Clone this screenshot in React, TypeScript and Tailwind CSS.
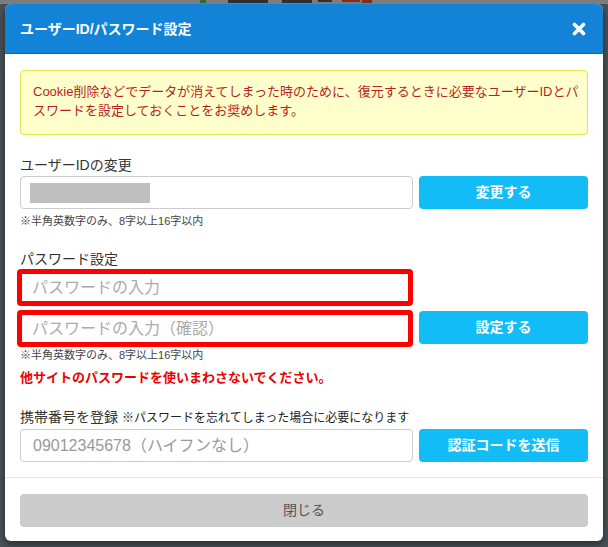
import React from 'react';

const FONT = { fontFamily: '"Liberation Sans", "Noto Sans CJK JP", sans-serif' };

function CloseIcon() {
    return (
        <svg width="14" height="14" viewBox="0 0 14 14" className="block">
            <path d="M2.5 2.5 L11.5 11.5 M11.5 2.5 L2.5 11.5" stroke="#ffffff" strokeWidth="3.6" strokeLinecap="round" />
        </svg>
    );
}

export default function App() {
    return (
        <div className="min-h-screen bg-[#4a5358] text-[#333333]" style={FONT}>
            {/* page behind the overlay */}
            <div className="h-[4px] bg-[#7c7c7c] relative">
                <div className="absolute left-[200px] top-0 h-[3px] w-[6px] bg-[#2f6b2f]" />
                <div className="absolute left-[228px] top-0 h-[3px] w-[40px] bg-[#303030]" />
                <div className="absolute left-[282px] top-0 h-[3px] w-[30px] bg-[#303030]" />
                <div className="absolute left-[318px] top-0 h-[2px] w-[14px] bg-[#303030]" />
                <div className="absolute left-[342px] top-0 h-[2px] w-[18px] bg-[#8a2a1a]" />
                <div className="absolute left-[362px] top-0 h-[3px] w-[10px] bg-[#8a2a1a]" />
            </div>

            <div className="mx-[5px] bg-white rounded-[6px] overflow-hidden shadow-[0_3px_9px_rgba(0,0,0,0.5)]">
                {/* header */}
                <div className="h-[50px] bg-[#1383d7] border-b border-[#0f68ab] flex items-center justify-between pl-[15px] pr-[17px]">
                    <h2 className="text-white text-[14px] font-bold leading-none">ユーザーID/パスワード設定</h2>
                    <CloseIcon />
                </div>

                {/* body */}
                <div className="px-[15px] pt-[16px] pb-[15px]">
                    <div className="h-[65px] bg-[#ffffcc] border border-[#e2e24a] rounded-[4px] pl-[12px] pt-[11px] text-[13px] leading-[19px] text-[#b81f1f]">
                        <div className="whitespace-nowrap">Cookie削除などでデータが消えてしまった時のために、復元するときに必要なユーザーIDとパ</div>
                        <div className="whitespace-nowrap">スワードを設定しておくことをお奨めします。</div>
                    </div>

                    {/* user id */}
                    <div className="mt-[20px] text-[14px] leading-[20px]">ユーザーIDの変更</div>
                    <div className="mt-[1px] flex gap-[6px]">
                        <div className="flex-1 h-[33px] border border-[#cccccc] rounded-[4px] flex items-center pl-[9px]">
                            <div className="w-[120px] h-[20px] bg-[#bfbfbf]" />
                        </div>
                        <button className="w-[169px] h-[33px] bg-[#12bdf7] rounded-[4px] text-white text-[14px] font-bold">変更する</button>
                    </div>
                    <div className="mt-[5px] text-[11px] leading-[15px] text-[#444444]">※半角英数字のみ、8字以上16字以内</div>

                    {/* password */}
                    <div className="mt-[21px] text-[14px] leading-[19px]">パスワード設定</div>
                    <div className="-ml-[3px] w-[396px] h-[37px] border-[5px] border-[#ff0000] rounded-[4px] flex items-center pl-[10px]">
                        <input
                            className="w-full outline-none bg-transparent text-[16px] placeholder:text-[#aaaaaa]"
                            placeholder="パスワードの入力"
                            style={FONT}
                        />
                    </div>
                    <div className="mt-[4px] flex items-start">
                        <div className="-ml-[3px] w-[396px] h-[37px] border-[5px] border-[#ff0000] rounded-[4px] flex items-center pl-[10px]">
                            <input
                                className="w-full outline-none bg-transparent text-[16px] placeholder:text-[#aaaaaa]"
                                placeholder="パスワードの入力（確認）"
                                style={FONT}
                            />
                        </div>
                        <button className="ml-auto mt-[1px] w-[169px] h-[33px] bg-[#12bdf7] rounded-[4px] text-white text-[14px] font-bold">設定する</button>
                    </div>
                    <div className="mt-[1px] text-[11px] leading-[15px] text-[#444444]">※半角英数字のみ、8字以上16字以内</div>
                    <div className="mt-[5px] text-[13px] leading-[19px] font-bold text-[#ee0000]">他サイトのパスワードを使いまわさないでください。</div>

                    {/* phone */}
                    <div className="mt-[20px] leading-[20px] flex items-baseline">
                        <span className="text-[14px]">携帯番号を登録</span>
                        <span className="ml-[4px] text-[12px] text-[#222222]">※パスワードを忘れてしまった場合に必要になります</span>
                    </div>
                    <div className="mt-[1px] flex gap-[6px]">
                        <div className="flex-1 h-[33px] border border-[#cccccc] rounded-[4px] flex items-center pl-[12px]">
                            <input
                                className="w-full outline-none bg-transparent text-[16px] placeholder:text-[#999999]"
                                placeholder="09012345678（ハイフンなし）"
                                style={FONT}
                            />
                        </div>
                        <button className="w-[169px] h-[33px] bg-[#12bdf7] rounded-[4px] text-white text-[14px] font-bold">認証コードを送信</button>
                    </div>
                </div>

                {/* footer */}
                <div className="border-t border-[#e5e5e5] px-[15px] pt-[16px] pb-[14px]">
                    <button className="w-full h-[33px] bg-[#cccccc] rounded-[4px] text-[#555555] text-[14px]">閉じる</button>
                </div>
            </div>
        </div>
    );
}
